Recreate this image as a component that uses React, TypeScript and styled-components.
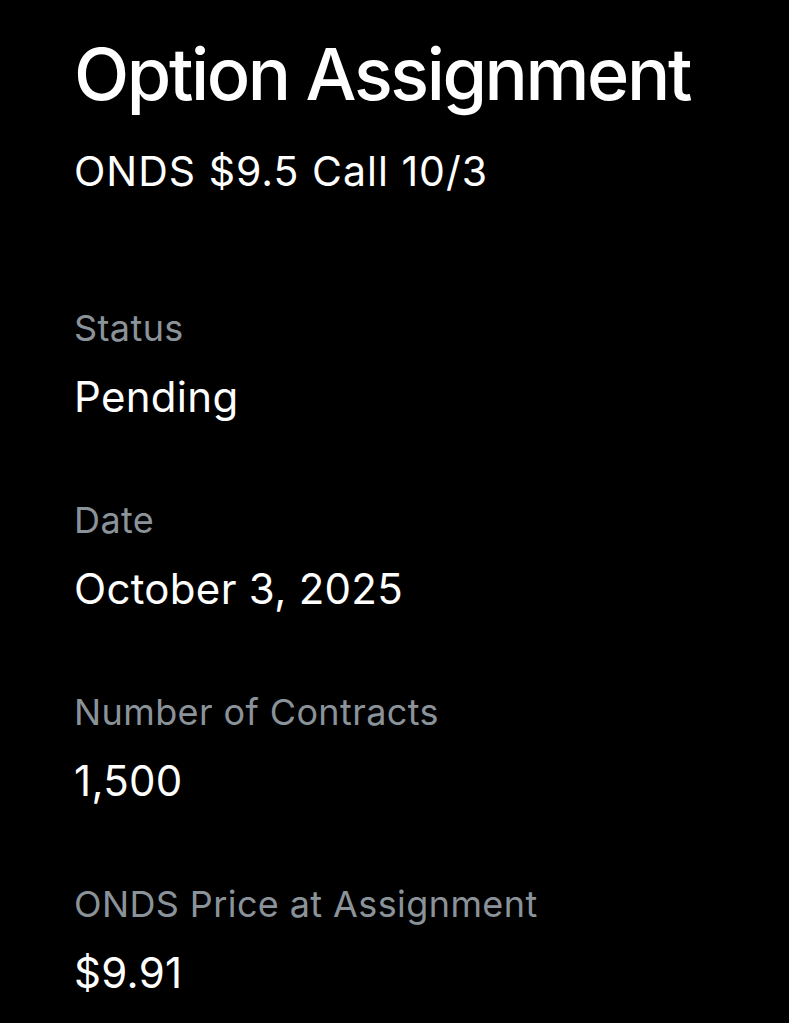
import styled, { createGlobalStyle } from "styled-components";

const GlobalStyle = createGlobalStyle`
  html, body {
    margin: 0;
    padding: 0;
    background: #000;
  }

  body {
    font-family: Inter, "Noto Sans", sans-serif;
    -webkit-font-smoothing: antialiased;
  }
`;

const DIV_Page = styled.div`
  min-height: 1023px;
  padding: 31px 74px 0;
  box-sizing: border-box;
  background: #000;
  color: #fff;
  overflow: hidden;
`;

const H1_Title = styled.h1`
  margin: 0;
  font-size: 72px;
  line-height: 86px;
  font-weight: 500;
  letter-spacing: -2.4px;
  white-space: nowrap;
`;

const P_Subtitle = styled.p`
  margin: 29px 0 0;
  font-size: 41px;
  line-height: 50px;
  font-weight: 400;
  letter-spacing: 1px;
  white-space: nowrap;
`;

const DL_Details = styled.dl`
  display: flex;
  flex-direction: column;
  row-gap: 76px;
  margin: 110px 0 0;
`;

const DIV_Field = styled.div`
  display: flex;
  flex-direction: column;
  row-gap: 22px;
`;

const DT_Label = styled.dt`
  font-size: 36px;
  line-height: 44px;
  letter-spacing: 0.4px;
  color: #8b939a;
  white-space: nowrap;
`;

const DD_Value = styled.dd`
  margin: 0;
  font-size: 42px;
  line-height: 50px;
  letter-spacing: 0.3px;
  color: #fff;
  white-space: nowrap;
`;

const fields = [
  { label: "Status", value: "Pending" },
  { label: "Date", value: "October 3, 2025" },
  { label: "Number of Contracts", value: "1,500" },
  { label: "ONDS Price at Assignment", value: "$9.91" },
];

const App = () => {
  return (
    <>
      <GlobalStyle />
      <DIV_Page>
        <H1_Title>Option Assignment</H1_Title>
        <P_Subtitle>ONDS $9.5 Call 10/3</P_Subtitle>
        <DL_Details>
          {fields.map((field) => (
            <DIV_Field key={field.label}>
              <DT_Label>{field.label}</DT_Label>
              <DD_Value>{field.value}</DD_Value>
            </DIV_Field>
          ))}
        </DL_Details>
      </DIV_Page>
    </>
  );
};

export default App;
